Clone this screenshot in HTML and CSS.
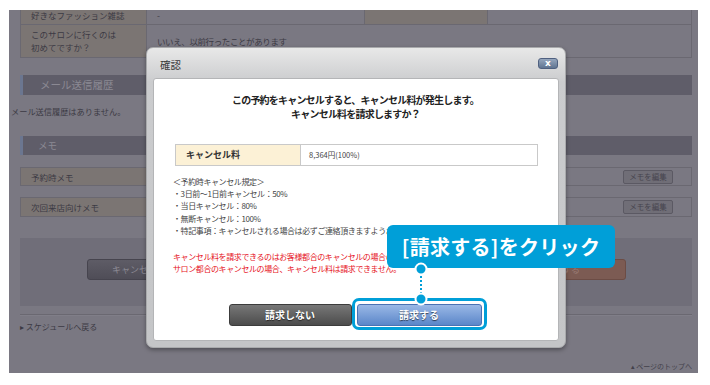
FILE: index.html
```html
<!DOCTYPE html>
<html lang="ja"><head>
  <meta charset="UTF-8"/>
  <title>予約詳細 - キャンセル確認</title>
  <link rel="stylesheet" href="styles.css">
</head><body>
  <div class="screen">
    <div class="page">
      <div class="info-table">
        <div class="cell label">好きなファッション雑誌</div>
        <div class="cell">-</div>
        <div class="cell label"></div>
        <div class="cell"></div>
        <div class="cell label tall">このサロンに行くのは<br>初めてですか？</div>
        <div class="cell wide tall">いいえ、以前行ったことがあります</div>
      </div>

      <h2 class="bar">メール送信履歴</h2>
      <p class="note">メール送信履歴はありません。</p>

      <h2 class="bar small">メモ</h2>
      <div class="memo-row"><span class="memo-label">予約時メモ</span><span class="memo-btn">メモを編集</span></div>
      <div class="memo-row gap"><span class="memo-label">次回来店向けメモ</span><span class="memo-btn">メモを編集</span></div>

      <div class="cancel-box">
        <span class="bg-btn dark">キャンセルしない</span>
        <span class="bg-btn orange">キャンセルする</span>
      </div>

      <div class="rule"></div>
      <div class="back-link">&#9656; スケジュールへ戻る</div>
      <div class="top-link">&#9652; ページのトップへ</div>
    </div>

    <div class="dialog">
      <div class="dialog-head">
        <span class="dialog-title">確認</span>
        <span class="close-btn">x</span>
      </div>
      <div class="dialog-body">
        <p class="msg">この予約をキャンセルすると、キャンセル料が発生します。<br>キャンセル料を請求しますか？</p>
        <div class="fee">
          <div class="fee-label">キャンセル料</div>
          <div class="fee-value">8,364円(100%)</div>
        </div>
        <div class="rules">
          ＜予約時キャンセル規定＞<br>
          ・3日前〜1日前キャンセル：50%<br>
          ・当日キャンセル：80%<br>
          ・無断キャンセル：100%<br>
          ・特記事項：キャンセルされる場合は必ずご連絡頂きますようお願いいたします。
        </div>
        <div class="warn">
          キャンセル料を請求できるのはお客様都合のキャンセルの場合のみです。<br>
          サロン都合のキャンセルの場合、キャンセル料は請求できません。
        </div>
        <div class="actions">
          <span class="btn btn-gray">請求しない</span>
          <span class="btn btn-blue">請求する</span>
        </div>
      </div>
    </div>

    <div class="callout">[請求する]をクリック</div>
    <svg class="connector" width="18" height="48" viewBox="0 0 18 48">
      <line x1="9" y1="16" x2="9" y2="33" stroke="#009fd8" stroke-width="2" stroke-dasharray="2 2"/>
      <circle cx="9" cy="9" r="5.5" fill="#009fd8" stroke="#fff" stroke-width="2"/>
      <circle cx="9" cy="39" r="5.5" fill="#009fd8" stroke="#fff" stroke-width="2"/>
    </svg>
  </div>
</body></html>
```

FILE: styles.css
```css
:root {
  --shade:      #7a7882;
  --shade-dark: #5f5d69;
  --shade-line: #6a6871;
  --dim-text:   #3c3a44;
  --cyan:       #009fd8;
}
* {box-sizing:border-box}
body {margin:0;background:#fff;font-family:"Noto Sans CJK JP","Noto Sans",sans-serif;color:#333}
p,h2 {margin:0}

.screen {position:relative;margin:10px 0 0 9px;width:689px;height:363px;background:var(--shade);overflow:hidden}
.page {padding:0 6px 0 11px}

/* background page (dimmed by the modal) */
.info-table {display:grid;grid-template-columns:125px 218px 123px 1fr;margin-top:-8px;
             border:1px solid var(--shade-line);border-bottom:none}
.cell {height:22px;border-bottom:1px solid var(--shade-line);border-left:1px solid var(--shade-line);
       font-size:8.5px;line-height:12px;color:var(--dim-text);padding:6px 10px;white-space:nowrap}
.cell:first-child,.cell.label.tall {border-left:none}
.cell.label {background:#7b7573}
.cell.wide {grid-column:2 / 5;letter-spacing:-0.4px}
.cell.tall {height:33px;padding-top:3px;line-height:13px}
.cell.wide.tall {padding-top:10px}

.bar {margin-top:17px;height:20px;background:var(--shade-dark);border-left:3px solid #6b7690;
      color:#8b8993;font-size:10.5px;font-weight:normal;line-height:20px;padding-left:17px}
.bar.small {margin-top:19px;height:19px;line-height:19px;font-size:9.5px;padding-left:15px}
.note {margin:10px 0 0 -9px;font-size:8.2px;line-height:12px;color:var(--dim-text)}

.memo-row {display:flex;justify-content:space-between;align-items:center;margin-top:12px;height:19px;
           border:1px solid var(--shade-line);background:linear-gradient(90deg,#7b7573 0 70%,var(--shade) 70%);
           padding:0 18px 0 10px}
.memo-row.gap {margin-top:11px;height:20px}
.memo-label {font-size:8.5px;color:var(--dim-text)}
.memo-btn {width:50px;height:14px;border:1px solid #5b5963;border-radius:2px;background:#706e77;
           font-size:7.5px;line-height:12px;text-align:center;color:#46444e}

.cancel-box {margin-top:21px;height:68px;background:#706e79;display:flex;justify-content:space-between;
             padding:21px 66px 0 67px}
.bg-btn {width:140px;height:21px;border-radius:3px;font-size:9px;line-height:19px}
.bg-btn.dark {background:linear-gradient(#5e5c66,#4f4d57);border:1px solid #46444e;color:#8b8993;padding-left:24px}
.bg-btn.orange {background:#7c5b53;border:1px solid #6c4c45;color:#9a7c75;padding-left:30px}

.rule {margin-top:8px;border-top:1px solid var(--shade-line);border-bottom:1px solid #807e88}
.back-link {margin-top:5px;font-size:8px;line-height:12px;color:var(--dim-text)}
.top-link {margin-top:28px;text-align:right;font-size:7px;color:#43414b}

/* modal */
.dialog {position:absolute;left:137px;top:37px;width:420px;height:301px;
         background:linear-gradient(#e8e8e8,#cbccce 34px,#c4c5c7);border:1px solid #a9aaac;
         border-radius:7px;box-shadow:0 2px 4px rgba(0,0,0,0.35);padding:0 6px 6px}
.dialog-head {display:flex;justify-content:space-between;align-items:center;height:30px;padding:0 1px 0 7px}
.dialog-title {font-size:10.5px;color:#3a3a3a;padding-top:3px}
.close-btn {width:20px;height:11px;border:1px solid #4f6080;border-radius:3px;
            background:linear-gradient(#95a6bd,#607491);color:#fff;font:bold 9px/9px "DejaVu Sans",sans-serif;
            text-align:center}
.dialog-body {height:263px;background:#fff;border:1px solid #b4b5b7;border-radius:3px;padding:14px 20px 0 19px;
              overflow:hidden}

.msg {text-align:center;font-size:10px;line-height:14px;font-weight:bold;color:#222;letter-spacing:-0.8px}
.fee {display:flex;margin:23px 0 0 2px;height:22px;border:1px solid #c9c9c9}
.fee-label {width:125px;background:#fcf1d6;border-right:1px solid #c9c9c9;font-size:9px;font-weight:bold;
            line-height:20px;padding-left:10px;color:#333}
.fee-value {font-size:7.5px;line-height:20px;padding-left:8px;color:#444}
.rules {margin-top:10px;font-size:8px;line-height:12.2px;color:#444;white-space:nowrap;letter-spacing:-0.4px}
.warn {margin-top:14px;font-size:8px;line-height:12px;color:#e6141e;white-space:nowrap;letter-spacing:-0.4px}

.actions {display:flex;justify-content:center;gap:5px;margin-top:29px;padding-right:1px}
.btn {position:relative;height:22px;border-radius:3px;font-size:10px;font-weight:bold;line-height:20px;
      text-align:center;color:#fff;text-shadow:0 1px 1px rgba(0,0,0,0.6)}
.btn-gray {width:123px;background:linear-gradient(#777,#4c4c4c);border:1px solid #3c3c3c}
.btn-blue {width:125px;background:linear-gradient(#9ab8e6,#5b86c9);border:1px solid #4a72b4}
.btn-blue::after {content:"";position:absolute;top:-7px;bottom:-5px;left:-6px;right:-6px;
                  border:3px solid var(--cyan);border-radius:7px}

.callout {position:absolute;left:378px;top:215px;width:228px;height:43px;background:var(--cyan);
          border-radius:6px;color:#fff;font-size:20px;font-weight:bold;line-height:43px;text-align:center;
          letter-spacing:0.3px}
.connector {position:absolute;left:403px;top:250px}
```
